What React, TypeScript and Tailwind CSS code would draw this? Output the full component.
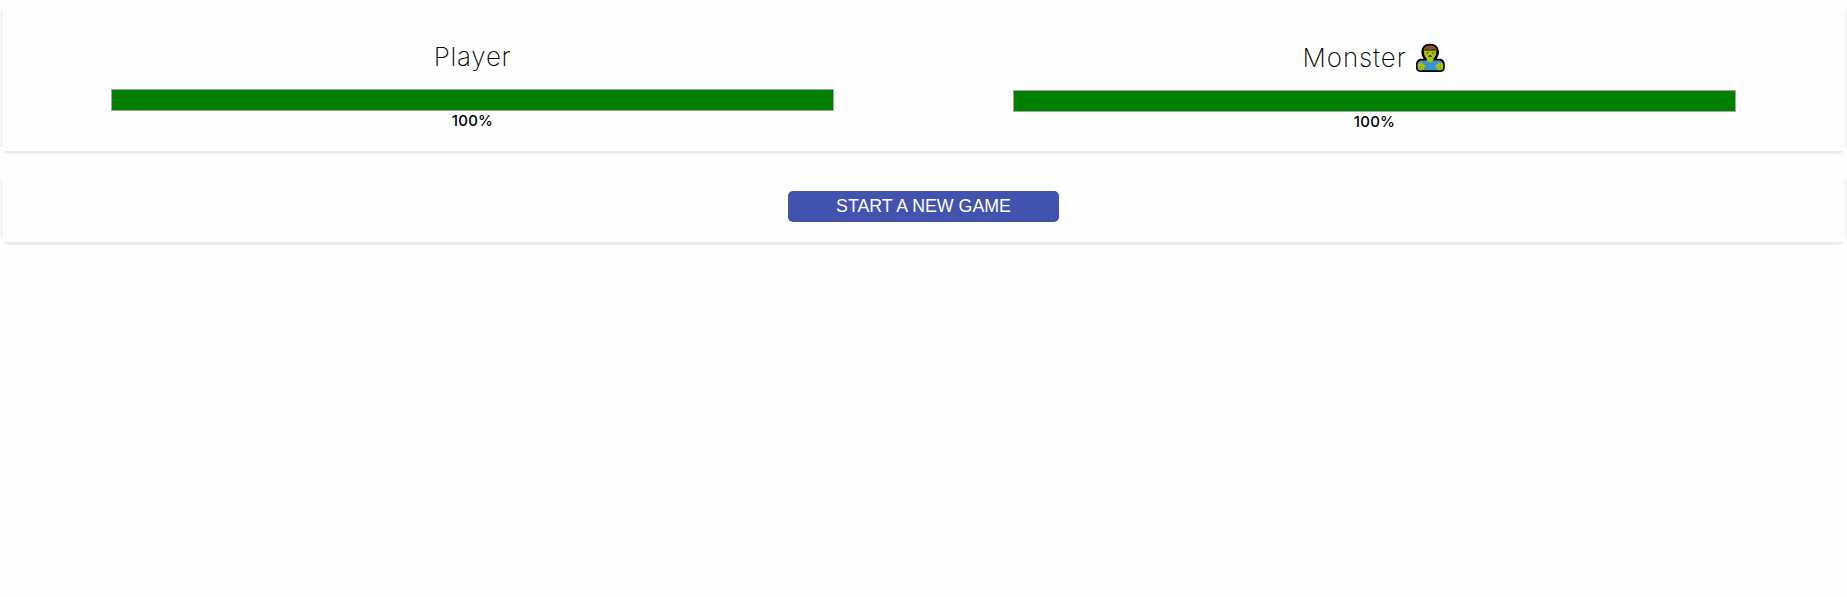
import type { ReactNode } from "react";

function Zombie() {
  return (
    <svg width="31" height="30" viewBox="0 0 31 30" aria-hidden="true" className="mt-px block">
      <path
        d="M15 .8C9.500.8 6.400 4.200 6.400 9c0 2.800.9 5 2.300 6.800H6C2.800 15.800 1 18.300 1 21.500v3.300c0 2.600 1.500 4.100 4 4.100h20.800c2.500 0 4-1.500 4-4.100v-3.300c0-3.200-1.800-5.700-5-5.700h-3.200C23 14 23.900 11.800 23.900 9c0-4.800-3.200-8.200-8.900-8.200z"
        fill="#000"
      />
      <path d="M6 17.400h18.800c2 .4 3.300 2 3.300 4.100v3.300c0 1.600-.9 2.500-2.400 2.500H5.100c-1.500 0-2.400-.9-2.400-2.500v-3.300c0-2.100 1.200-3.700 3.300-4.100z" fill="#3a8fd6" />
      <path d="M11.800 14.800h6.600v2.700c0 1.200-1.500 2-3.300 2s-3.300-.8-3.300-2z" fill="#a4c400" />
      <path d="M9 7.500h12.200v2c0 4-2.600 7-6.100 7S9 13.500 9 9.500z" fill="#a4c400" />
      <path d="M8.500 8.400C8.200 4.600 10.700 2.500 15.100 2.500s6.900 2.100 6.600 5.900c-1-.2-1.600-.8-2-1.900-2.600.6-6.600.6-9.200 0-.4 1.100-1 1.700-2 1.900z" fill="#85502b" />
      <circle cx="12.600" cy="10" r=".8" fill="#222" />
      <circle cx="17.600" cy="10" r=".8" fill="#222" />
      <path d="M13.100 13.700c.3-2.100 3.700-2.100 4 0z" fill="#111" />
      <path d="M2.600 21.200c1.300-2.200 4.500-2.200 6 0 1.100.6 2.100 1.500 2.100 2.400 0 .7-.9.900-1.500.4v2.600c-1 .8-5.600.8-6.200-.2z" fill="#a4c400" />
      <path d="M28.200 21.200c-1.300-2.200-4.500-2.200-6 0-1.100.6-2.100 1.500-2.100 2.400 0 .7.9.9 1.500.4v2.600c1 .8 5.600.8 6.200-.2z" fill="#a4c400" />
      <path d="M5.200 24v2.500M7.300 24v2.500M23.500 24v2.500M25.600 24v2.500" stroke="#6f8f10" strokeWidth=".5" />
    </svg>
  );
}

function Panel({ children, className }: { children: ReactNode; className: string }) {
  return (
    <section className="px-px">
      <div className={`border-x border-[#ebebeb] ${className}`}>{children}</div>
      <div className="mx-[3px] mt-1 h-px bg-[#ebebeb]" />
      <div className="mx-1 h-px bg-[#ebebeb]" />
      <div className="mx-[7px] h-px bg-[#ebebeb]" />
    </section>
  );
}

function HealthBar({ value }: { value: number }) {
  return (
    <>
      <div className="h-[22px] w-[723px] border border-[#a4a4a4]">
        <div className="h-full bg-[#008000]" style={{ width: `${value}%` }} />
      </div>
      <p className="font-['Inter',sans-serif] text-[15px] leading-[20px] font-medium tracking-[0.2px] text-black">{value}%</p>
    </>
  );
}

export default function App() {
  return (
    <main className="min-h-screen bg-[#fefefe] pt-[10px]">
      <Panel className="flex h-[137px] justify-between px-[109px]">
        <div className="flex flex-col items-center pt-[31px]">
          <h1 className="h-12 font-['Inter',sans-serif] text-[26px] leading-[32px] font-extralight tracking-[0.75px] text-black">Player</h1>
          <HealthBar value={100} />
        </div>
        <div className="flex flex-col items-center pt-8">
          <h1 className="flex h-12 gap-[9px] font-['Inter',sans-serif] text-[26px] leading-[32px] font-extralight tracking-[0.9px] text-black">
            <span>Monster</span>
            <Zombie />
          </h1>
          <HealthBar value={100} />
        </div>
      </Panel>
      <div className="h-[25px]" />
      <Panel className="flex h-[59px] justify-center pt-3">
        <button className="h-[31px] w-[271px] rounded-[5px] bg-[#4252af] font-['Liberation_Sans',Arial,sans-serif] text-[17.8px] leading-[29px] text-white">
          START A NEW GAME
        </button>
      </Panel>
    </main>
  );
}
